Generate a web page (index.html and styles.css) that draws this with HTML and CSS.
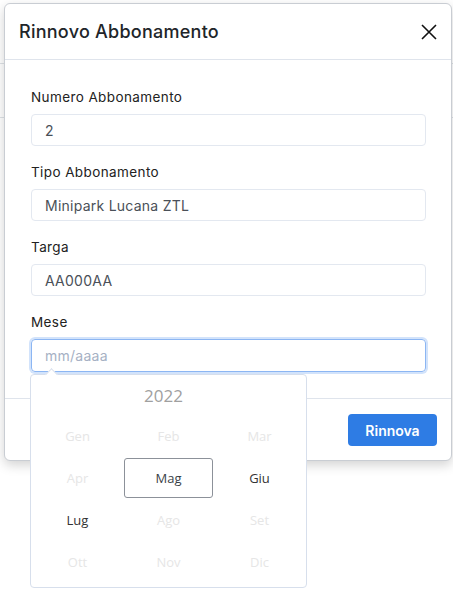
FILE: index.html
```html
<!DOCTYPE html>
<html lang="it">
<head>
<meta charset="utf-8">
<title>Rinnovo Abbonamento</title>
<link rel="stylesheet" href="styles.css">
</head>
<body>
<div class="page">
  <div class="modal">
    <div class="modal-header">
      <h5 class="modal-title">Rinnovo Abbonamento</h5>
      <button class="close" type="button" aria-label="Chiudi">
        <svg width="16" height="16" viewBox="0 0 16 16"><path d="M1 1L15 15M15 1L1 15" stroke="#111" stroke-width="1.6" fill="none"/></svg>
      </button>
    </div>
    <div class="modal-body">
      <div class="field">
        <label class="label">Numero Abbonamento</label>
        <div class="input">2</div>
      </div>
      <div class="field">
        <label class="label">Tipo Abbonamento</label>
        <div class="input">Minipark Lucana ZTL</div>
      </div>
      <div class="field">
        <label class="label">Targa</label>
        <div class="input">AA000AA</div>
      </div>
      <div class="field field-last">
        <label class="label">Mese</label>
        <div class="input input-focus placeholder">mm/aaaa</div>
        <div class="picker">
          <div class="picker-year">2022</div>
          <div class="months">
            <span class="month off">Gen</span>
            <span class="month off">Feb</span>
            <span class="month off">Mar</span>
            <span class="month off">Apr</span>
            <span class="month sel">Mag</span>
            <span class="month">Giu</span>
            <span class="month">Lug</span>
            <span class="month off">Ago</span>
            <span class="month off">Set</span>
            <span class="month off">Ott</span>
            <span class="month off">Nov</span>
            <span class="month off">Dic</span>
          </div>
        </div>
      </div>
    </div>
    <div class="modal-footer">
      <button class="btn" type="button">Rinnova</button>
    </div>
  </div>
</div>
</body>
</html>
```

FILE: styles.css
```css
* { box-sizing: border-box; }
html, body { margin: 0; padding: 0; }
body {
  width: 453px;
  height: 595px;
  overflow: hidden;
  background: #fff;
  font-family: Inter, "Noto Sans", sans-serif;
}
.page {
  height: 595px;
  padding: 3px 1px 0 4px;
  background:
    linear-gradient(#dee2e6, #dee2e6) 0 63px / 100% 1px no-repeat,
    linear-gradient(#dee2e6, #dee2e6) 0 117px / 100% 1px no-repeat;
}
.modal {
  position: relative;
  width: 448px;
  background: #fff;
  border: 1px solid #c9cdd3;
  border-radius: 6px;
  box-shadow: 0 4px 12px rgba(0,0,0,0.18);
}
.modal-header {
  height: 56px;
  display: flex;
  align-items: center;
  justify-content: space-between;
  padding: 0 14px 0 14px;
  border-bottom: 1px solid #dfe4ec;
}
.modal-title {
  margin: 0;
  font-size: 18px;
  font-weight: 500;
  letter-spacing: 0.25px;
  color: #212529;
}
.close {
  border: 0;
  background: none;
  padding: 0;
  width: 16px;
  height: 16px;
  display: flex;
}
.modal-body {
  position: relative;
  padding: 27px 25px 26px 26px;
}
.field { margin-bottom: 16px; position: relative; }
.field-last { margin-bottom: 0; }
.label {
  display: block;
  font-size: 13.5px;
  letter-spacing: 0.4px;
  line-height: 20px;
  color: #222;
  margin-bottom: 7px;
}
.input {
  height: 32px;
  border: 1px solid #e3e8f0;
  border-radius: 4px;
  padding: 0 13px;
  display: flex;
  align-items: center;
  font-size: 14px;
  letter-spacing: 0.25px;
  color: #4a5058;
}
.input-focus {
  height: 33px;
  border-color: #8cb6f3;
  box-shadow: 0 0 0 2px #d2e3fb;
}
.placeholder { color: #a6b1c4; }
.picker {
  position: absolute;
  left: -1px;
  top: 62px;
  width: 277px;
  height: 214px;
  background: #fff;
  border: 1px solid #d7dfec;
  border-radius: 4px;
  z-index: 5;
  font-family: "Open Sans", sans-serif;
  padding: 0 1px;
}
.picker::before {
  content: "";
  position: absolute;
  left: 16px;
  top: -5px;
  width: 8px;
  height: 8px;
  background: #fff;
  border-left: 1px solid #d7dfec;
  border-top: 1px solid #d7dfec;
  transform: rotate(45deg);
}
.picker-year {
  height: 40px;
  display: flex;
  align-items: center;
  justify-content: center;
  padding-right: 10px;
  font-size: 17px;
  color: #a0a0a0;
}
.months {
  display: grid;
  grid-template-columns: repeat(3, 1fr);
  grid-auto-rows: 42px;
}
.month {
  margin: 1px;
  display: flex;
  align-items: center;
  justify-content: center;
  font-size: 13px;
  color: #333;
  border: 1px solid transparent;
  border-radius: 3px;
}
.month.off { color: #e6e6e6; }
.month.sel { border-color: #8c9199; color: #3a3f47; }
.modal-footer {
  border-top: 1px solid #dfe4ec;
  padding: 15px 14px 14px;
  display: flex;
  justify-content: flex-end;
}
.btn {
  width: 89px;
  height: 32px;
  border: 0;
  border-radius: 4px;
  background: #2e7ce4;
  color: #fff;
  font-family: Inter, "Noto Sans", sans-serif;
  font-size: 14px;
  font-weight: 600;
}
```
